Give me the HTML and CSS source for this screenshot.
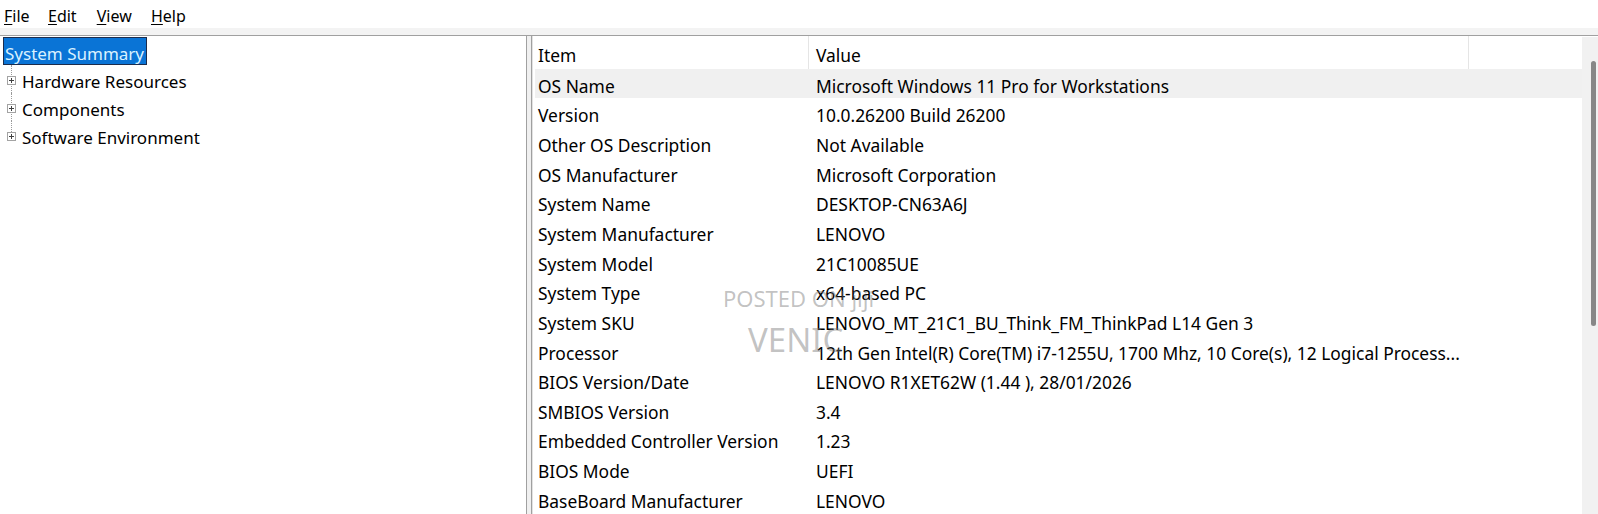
FILE: index.html
```html
<!DOCTYPE html>
<html lang="en">
<head>
<meta charset="utf-8">
<title>System Information</title>
<link rel="stylesheet" href="styles.css">
</head>
<body>
<div class="window">
  <nav class="menubar">
    <span class="menu-item"><u>F</u>ile</span>
    <span class="menu-item"><u>E</u>dit</span>
    <span class="menu-item"><u>V</u>iew</span>
    <span class="menu-item"><u>H</u>elp</span>
  </nav>
  <div class="menu-strip"></div>

  <main class="panes">
    <aside class="tree-pane">
      <ul class="tree">
        <li class="tree-root">
          <span class="tree-label selected">System Summary</span>
          <ul class="tree-children">
            <li class="tree-node">
              <svg class="expander" width="9" height="9" viewBox="0 0 9 9"><rect x="0.5" y="0.5" width="8" height="8" fill="#fff" stroke="#a3a3a3"/><path d="M2 4.5h5M4.5 2v5" stroke="#404040"/></svg>
              <span class="tree-label">Hardware Resources</span>
            </li>
            <li class="tree-node">
              <svg class="expander" width="9" height="9" viewBox="0 0 9 9"><rect x="0.5" y="0.5" width="8" height="8" fill="#fff" stroke="#a3a3a3"/><path d="M2 4.5h5M4.5 2v5" stroke="#404040"/></svg>
              <span class="tree-label">Components</span>
            </li>
            <li class="tree-node">
              <svg class="expander" width="9" height="9" viewBox="0 0 9 9"><rect x="0.5" y="0.5" width="8" height="8" fill="#fff" stroke="#a3a3a3"/><path d="M2 4.5h5M4.5 2v5" stroke="#404040"/></svg>
              <span class="tree-label">Software Environment</span>
            </li>
          </ul>
        </li>
      </ul>
    </aside>

    <div class="splitter"></div>

    <section class="list-pane">
      <div class="list">
        <div class="list-header">
          <div class="cell item">Item</div>
          <div class="cell value">Value</div>
        </div>
        <div class="row hot"><div class="cell item">OS Name</div><div class="cell value">Microsoft Windows 11 Pro for Workstations</div></div>
        <div class="row"><div class="cell item">Version</div><div class="cell value">10.0.26200 Build 26200</div></div>
        <div class="row"><div class="cell item">Other OS Description</div><div class="cell value">Not Available</div></div>
        <div class="row"><div class="cell item">OS Manufacturer</div><div class="cell value">Microsoft Corporation</div></div>
        <div class="row"><div class="cell item">System Name</div><div class="cell value">DESKTOP-CN63A6J</div></div>
        <div class="row"><div class="cell item">System Manufacturer</div><div class="cell value">LENOVO</div></div>
        <div class="row"><div class="cell item">System Model</div><div class="cell value">21C10085UE</div></div>
        <div class="row"><div class="cell item">System Type</div><div class="cell value">x64-based PC</div></div>
        <div class="row"><div class="cell item">System SKU</div><div class="cell value">LENOVO_MT_21C1_BU_Think_FM_ThinkPad L14 Gen 3</div></div>
        <div class="row"><div class="cell item">Processor</div><div class="cell value">12th Gen Intel(R) Core(TM) i7-1255U, 1700 Mhz, 10 Core(s), 12 Logical Process...</div></div>
        <div class="row"><div class="cell item">BIOS Version/Date</div><div class="cell value">LENOVO R1XET62W (1.44 ), 28/01/2026</div></div>
        <div class="row"><div class="cell item">SMBIOS Version</div><div class="cell value">3.4</div></div>
        <div class="row"><div class="cell item">Embedded Controller Version</div><div class="cell value">1.23</div></div>
        <div class="row"><div class="cell item">BIOS Mode</div><div class="cell value">UEFI</div></div>
        <div class="row"><div class="cell item">BaseBoard Manufacturer</div><div class="cell value">LENOVO</div></div>
      </div>
      <div class="scrollbar"><div class="thumb"></div></div>
    </section>
  </main>

  <div class="watermark">
    <span class="wm-line small">POSTED ON jiji</span>
    <span class="wm-line large">VENIC</span>
  </div>
</div>
</body>
</html>
```

FILE: styles.css
```css
* {
  box-sizing: border-box;
}

html, body {
  margin: 0;
  padding: 0;
  height: 100%;
}

body {
  font-family: "Noto Sans", "Open Sans", sans-serif;
  color: #000;
  background: #fff;
  overflow: hidden;
}

.window {
  position: relative;
  height: 514px;
  display: flex;
  flex-direction: column;
}

/* ---- menu bar ---- */
.menubar {
  height: 28px;
  padding: 4px 0 0 4px;
  display: grid;
  grid-template-columns: 44px 48.7px 54.3px auto;
  justify-content: start;
  font-size: 16px;
  line-height: 24px;
  background: #fff;
}

.menu-item u {
  text-decoration-thickness: 1px;
  text-underline-offset: 2px;
}

.menu-strip {
  height: 8px;
  background: #f3f3f3;
  border-bottom: 1px solid #a0a0a0;
}

/* ---- panes ---- */
.panes {
  flex: 1;
  display: flex;
  min-height: 0;
  background: #f0f0f0;
}

.tree-pane {
  width: 527px;
  background: #fff;
  border-right: 1px solid #a0a0a0;
  font-size: 17px;
}

.splitter {
  width: 4px;
}

/* ---- tree ---- */
.tree,
.tree-children {
  list-style: none;
  margin: 0;
  padding: 0;
}

.tree-root {
  padding-top: 1px;
}

.tree-root > .tree-label {
  display: inline-block;
  margin-left: 3px;
  padding: 5px 2px 0 1px;
  height: 27.5px;
  line-height: 21.5px;
}

.tree-label.selected {
  background: #0a74d6;
  color: #d9f1ff;
  border: 1px solid #1c2c4c;
}

.tree-node {
  position: relative;
  height: 27.8px;
  display: flex;
  align-items: center;
  padding-left: 7px;
  padding-top: 2px;
}

/* dotted connector running down the child column */
.tree-node::before {
  content: "";
  position: absolute;
  left: 11px;
  top: 0;
  bottom: 0;
  border-left: 1px dotted #9a9a9a;
}

.tree-node:last-child::before {
  bottom: 45%;
}

.expander {
  position: relative;
  flex: none;
  display: block;
  margin-top: 2px;
}

.tree-node .tree-label {
  margin-left: 6px;
  padding-top: 5px;
  line-height: 22.5px;
}

/* ---- list view ---- */
.list-pane {
  flex: 1;
  display: flex;
  background: #fff;
  border-left: 1px solid #a0a0a0;
  box-shadow: inset 1px 0 0 #e2e2e2;
  font-size: 17.4px;
}

.list {
  flex: 1;
  padding-left: 3px;
}

.list-header,
.row {
  display: grid;
  grid-template-columns: 274px 660px;
}

.list-header {
  height: 32.6px;
}

.list-header .cell {
  padding-top: 7px;
  line-height: 25.6px;
  border-right: 1px solid #e5e5e5;
}

.row {
  height: 29.66px;
}

.row.hot {
  background: #f0f0f0;
}

.row .cell {
  padding-top: 5px;
  line-height: 24.66px;
}

.cell {
  white-space: nowrap;
  overflow: hidden;
}

.cell.item {
  padding-left: 3px;
}

.cell.value {
  padding-left: 7px;
}

.scrollbar {
  width: 16px;
  margin-top: 1px;
  background: #f1f1f1;
  padding: 24px 2px 0 9px;
}

.thumb {
  height: 265px;
  border-radius: 3px;
  background: #878787;
}

/* ---- watermark ---- */
.watermark {
  position: absolute;
  left: 723px;
  top: 287px;
  color: rgba(120, 120, 120, 0.45);
  pointer-events: none;
}

.wm-line {
  display: block;
  white-space: nowrap;
}

.wm-line.small {
  font-size: 22px;
  line-height: 22px;
}

.wm-line.large {
  margin: 14px 0 0 25px;
  font-size: 33px;
  line-height: 33px;
}
```
